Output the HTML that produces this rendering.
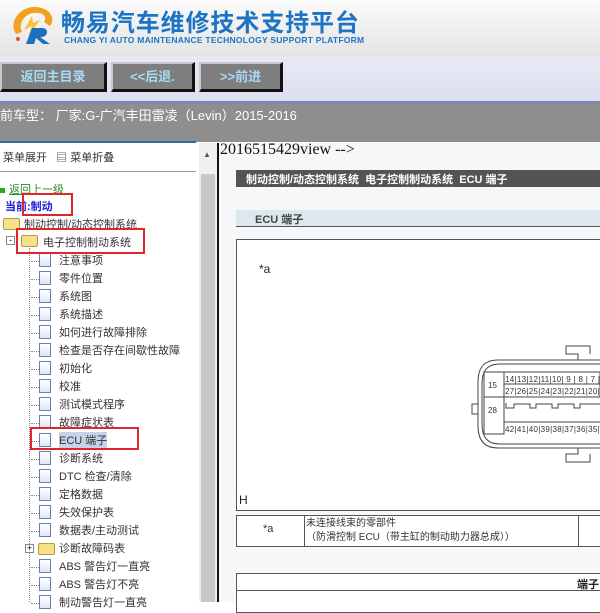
<!DOCTYPE html>
<html><head><meta charset="utf-8"><style>
*{margin:0;padding:0;box-sizing:border-box}
body{width:600px;height:602px;overflow:hidden;position:relative;font-family:"Liberation Sans","Noto Sans CJK SC",sans-serif;background:#fff}
.a{position:absolute}
.hdr{left:0;top:0;width:600px;height:56px;background:linear-gradient(#fbfbfb,#e4e4e4)}
.nav{left:0;top:56px;width:600px;height:45px;background:linear-gradient(#e8e9f4,#dcdfee)}
.btn{top:62px;height:30px;background:#7e7e7e;border-top:2px solid #c8c8c8;border-left:2px solid #c8c8c8;border-right:3px solid #111;border-bottom:3px solid #111;color:#a9d8f5;font-weight:bold;font-size:13px;text-align:center;line-height:25px}
.bar{left:0;top:101px;width:600px;height:41px;background:#8e8e8e;border-top:2px solid #6d8ac6;color:#fff;font-size:13px;padding:2px 0 0 0}
.tree{font-size:11px;color:#333;white-space:nowrap}
.doc{width:12px;height:14px;border:1px solid #6a7fae;background:linear-gradient(#fff,#dfe6f6)}
.fold{width:17px;height:12px;background:#f6e08a;border:1px solid #b79b3a;border-radius:2px}
.red{border:2px solid #e0262c}
</style></head><body>
<div class="a hdr"></div>
<svg class="a" style="left:6px;top:4px" width="52" height="42" viewBox="0 0 52 42">
<path d="M10 30 C2 18 14 2 30 3 C44 4 50 14 44 22 L38 18 C42 12 36 8 28 9 C18 10 12 20 16 28Z" fill="#f2a020"/>
<path d="M26 12 L18 26 L26 22 L22 32 L34 16 L27 19Z" fill="#f7c531"/>
<path d="M20 40 L26 24 L36 24 C44 24 42 34 34 33 L44 40 L37 40 L30 34 L28 40Z" fill="#1f6fbf"/>
<circle cx="12" cy="35" r="2" fill="#e05a20"/></svg>
<div class="a" style="left:61px;top:3px;font-size:24px;font-weight:bold;color:#1e74c4;letter-spacing:0.9px;font-family:'Noto Sans CJK SC',sans-serif">畅易汽车维修技术支持平台</div>
<div class="a" style="left:64px;top:35px;font-size:8.5px;font-weight:bold;color:#1e74c4;letter-spacing:0.25px">CHANG YI AUTO MAINTENANCE TECHNOLOGY SUPPORT PLATFORM</div>
<div class="a nav"></div>
<div class="a btn" style="left:0;width:107px">返回主目录</div>
<div class="a btn" style="left:111px;width:84px">&lt;&lt;后退.</div>
<div class="a btn" style="left:199px;width:84px">&gt;&gt;前进</div>
<div class="a bar">前车型： 厂家:G-广汽丰田雷凌（Levin）2015-2016</div>
<div class="a" style="left:0;top:141px;width:196px;height:2px;background:#2e6fa0"></div>
<div class="a" style="left:0;top:143px;width:199px;height:459px;background:#fff"></div>
<div class="a" style="left:199px;top:143px;width:18px;height:459px;background:#f0f0f0"></div>
<div class="a" style="left:201px;top:174px;width:14px;height:428px;background:#c8c8c8"></div>
<div class="a" style="left:203px;top:150px;font-size:8px;color:#555">▲</div>
<div class="a" style="left:217px;top:143px;width:2px;height:459px;background:#111"></div>
<div class="a" style="left:219px;top:143px;width:381px;height:459px;background:#f6f7f8"></div>
<div class="a tree" style="left:3px;top:149px">菜单展开 &nbsp;&nbsp;▤ 菜单折叠</div>
<div class="a" style="left:0;top:171px;width:196px;height:1px;background:#999"></div>
<div class="a tree" style="left:0;top:181px"><span style="display:inline-block;width:5px;height:5px;background:#2a2;margin-right:4px"></span><span style="color:#2a8a2a;text-decoration:underline">返回上一级</span></div>
<div class="a tree" style="left:5px;top:198px;color:#1a1ad8;font-weight:bold">当前:制动</div>
<div class="a fold" style="left:3px;top:218px"></div>
<div class="a tree" style="left:24px;top:216px">制动控制/动态控制系统</div>
<div class="a" style="left:6px;top:236px;width:9px;height:9px;border:1px solid #888;font-size:9px;line-height:6px;text-align:center;background:#fff">-</div>
<div class="a fold" style="left:21px;top:235px"></div>
<div class="a tree" style="left:43px;top:234px">电子控制制动系统</div>
<div class="a" style="left:29px;top:248px;width:1px;height:354px;border-left:1px dotted #888"></div>
<div id="items"></div>
<div class="a red" style="left:22px;top:193px;width:51px;height:23px"></div>
<div class="a red" style="left:16px;top:228px;width:129px;height:26px"></div>
<div class="a red" style="left:30px;top:427px;width:109px;height:23px"></div>
<div class="a" style="left:220px;top:141px;font-family:'Liberation Serif',serif;font-size:16px;color:#111">2016515429view --&gt;</div>
<div class="a" style="left:236px;top:170px;width:364px;height:17px;background:#545454;color:#fff;font-size:11px;font-weight:bold;padding:1px 0 0 10px">制动控制/动态控制系统 &nbsp;电子控制制动系统 &nbsp;ECU 端子</div>
<div class="a" style="left:236px;top:210px;width:364px;height:17px;background:#dde8ee;border-bottom:1px solid #555;color:#444;font-size:11px;font-weight:bold;padding:1px 0 0 19px">ECU 端子</div>
<div class="a" style="left:236px;top:239px;width:370px;height:272px;background:#fff;border:1px solid #555"></div>
<div class="a" style="left:259px;top:262px;font-size:12px;color:#222">*a</div>
<div class="a" style="left:239px;top:493px;font-size:12px;color:#222">H</div>
<svg class="a" style="left:470px;top:342px" width="130" height="125" viewBox="0 0 130 125">
<g fill="none" stroke="#444" stroke-width="1">
<path d="M130 18 L28 18 C12 18 8 28 8 40 L8 84 C8 98 14 106 28 106 L130 106"/>
<path d="M130 22 L30 22 C16 22 12 30 12 42 L12 82 C12 96 18 102 30 102 L130 102"/>
<path d="M108 18 L108 12 L96 12 L96 4 L120 4 L120 12"/>
<path d="M108 106 L108 112 L96 112 L96 120 L120 120 L120 112"/>
<path d="M8 62 L2 62 L2 72 L8 72"/>
<rect x="14" y="30" width="20" height="62"/>
<path d="M14 55 L130 55"/>
<rect x="34" y="30" width="96" height="25"/>
<path d="M34 42 L130 42"/>
<path d="M34 80 L130 80"/>
<path d="M36 61 L36 66 L44 66 L44 62 L60 62 L60 66 L66 66 L66 62 L82 62 L82 66 L88 66 L88 62 L104 62 L104 66 L110 66 L110 62 L130 62"/>
</g>
<g font-family="Liberation Sans" font-size="8" fill="#333">
<text x="18" y="46">15</text><text x="18" y="71">28</text>
<text x="35" y="40" letter-spacing="0.3">14|13|12|11|10| 9 | 8 | 7 | 6 | 5</text>
<text x="35" y="52" letter-spacing="0.3">27|26|25|24|23|22|21|20|19|18</text>
<text x="35" y="90" letter-spacing="0.3">42|41|40|39|38|37|36|35|34|33</text>
</g></svg>
<div class="a" style="left:236px;top:515px;width:370px;height:32px;background:#fff;border:1px solid #555"></div>
<div class="a" style="left:304px;top:515px;width:1px;height:32px;background:#555"></div>
<div class="a" style="left:578px;top:515px;width:1px;height:32px;background:#555"></div>
<div class="a" style="left:263px;top:523px;font-size:11px;color:#333">*a</div>
<div class="a" style="left:306px;top:517px;font-size:10px;color:#333;line-height:14px">未连接线束的零部件<br>（防滑控制 ECU（带主缸的制动助力器总成））</div>
<div class="a" style="left:236px;top:573px;width:370px;height:40px;background:#fff;border:1px solid #555"></div>
<div class="a" style="left:236px;top:590px;width:370px;height:1px;background:#555"></div>
<div class="a" style="left:577px;top:576px;font-size:11px;font-weight:bold;color:#222">端子</div>
<script>
var t=["注意事项","零件位置","系统图","系统描述","如何进行故障排除","检查是否存在间歇性故障","初始化","校准","测试模式程序","故障症状表","ECU 端子","诊断系统","DTC 检查/清除","定格数据","失效保护表","数据表/主动测试","诊断故障码表","ABS 警告灯一直亮","ABS 警告灯不亮","制动警告灯一直亮"];
var h="";for(var i=0;i<t.length;i++){var y=253+i*18;
if(i==16){h+='<div class="a" style="left:25px;top:'+(y+3)+'px;width:9px;height:9px;border:1px solid #888;background:#fff;font-size:9px;line-height:7px;text-align:center">+</div><div class="a fold" style="left:38px;top:'+(y+2)+'px"></div>';}
else{h+='<div class="a" style="left:31px;top:'+(y+8)+'px;width:8px;border-top:1px dotted #888"></div><div class="a doc" style="left:39px;top:'+y+'px"></div>';}
h+='<div class="a tree" style="left:59px;top:'+(y-1)+'px;'+(i==10?'background:#c5d3e8':'')+'">'+t[i]+'</div>';}
document.getElementById("items").innerHTML=h;
</script>
</body></html>
